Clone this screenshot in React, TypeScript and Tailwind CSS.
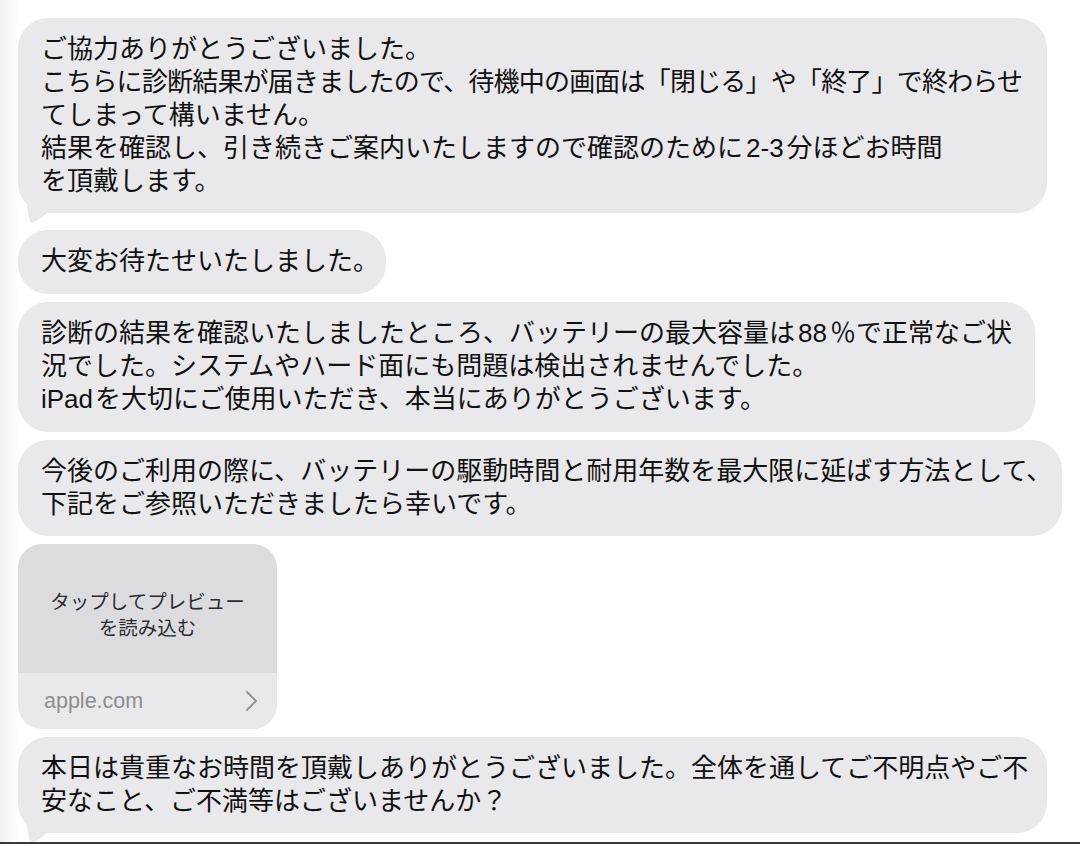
import { ReactNode } from "react";

// Received-message tail, drawn at the bottom-left corner of a bubble
function Tail() {
  return (
    <svg
      viewBox="0 0 44 34"
      className="absolute left-0 bottom-[-10px] w-[44px] h-[34px]"
    >
      <path
        d="M9 8 C9 20 10 28 13 34 C19 32 25 28 30 23 L44 23 L44 8 Z"
        className="fill-[#e9e9eb]"
      />
    </svg>
  );
}

function Bubble({
  width,
  tail,
  className = "",
  children,
}: {
  width: string;
  tail?: boolean;
  className?: string;
  children: ReactNode;
}) {
  return (
    <div
      className={`relative bg-[#e9e9eb] rounded-[30px] pl-[23px] pt-[15px] text-[26px] leading-[33px] text-[#111] ${width} ${className}`}
    >
      {tail && <Tail />}
      <div className="relative flex flex-col whitespace-nowrap">{children}</div>
    </div>
  );
}

export default function App() {
  return (
    <div className="w-[1080px] h-[844px] flex flex-col overflow-hidden bg-[linear-gradient(to_right,#f1f1f1,#ffffff_18px)] font-['Liberation_Sans','Noto_Sans_CJK_JP',sans-serif]">
      <div className="flex-1 overflow-hidden flex flex-col items-start gap-[8px] pt-[18px] pl-[18px]">
        {/* First message */}
        <Bubble width="w-[1029px]" tail className="pb-[15px] mb-[9px]">
          <span>ご協力ありがとうございました。</span>
          <span className="tracking-[-0.8px]">
            こちらに診断結果が届きましたので、待機中の画面は「閉じる」や「終了」で終わらせ
          </span>
          <span>てしまって構いません。</span>
          <span>
            結果を確認し、引き続きご案内いたしますので確認のために
            <span className="mx-[3px]">2-3</span>分ほどお時間
          </span>
          <span>を頂戴します。</span>
        </Bubble>

        <Bubble width="w-[368px]" className="pb-[16px]">
          <span>大変お待たせいたしました。</span>
        </Bubble>

        <Bubble width="w-[1017px]" className="pb-[16px]">
          <span>
            診断の結果を確認いたしましたところ、バッテリーの最大容量は
            <span className="mx-[3px]">88</span>％で正常なご状
          </span>
          <span>況でした。システムやハード面にも問題は検出されませんでした。</span>
          <span>
            iPad<span className="ml-[2px]">を大切にご使用いただき、本当にありがとうございます。</span>
          </span>
        </Bubble>

        <Bubble width="w-[1044px]" className="pb-[15px]">
          <span>
            今後のご利用の際に、バッテリーの駆動時間と耐用年数を最大限に延ばす方法として、
          </span>
          <span>下記をご参照いただきましたら幸いです。</span>
        </Bubble>

        {/* Link preview */}
        <div className="w-[259px] rounded-[24px] overflow-hidden flex flex-col">
          <div className="h-[129px] bg-[#dcdcdf] pt-[45px] flex flex-col items-center text-[19.5px] leading-[26px] text-[#2c2c2e]">
            <span>タップしてプレビュー</span>
            <span>を読み込む</span>
          </div>
          <div className="h-[56px] bg-[#e9e9eb] flex items-center justify-between pl-[26px] pr-[19px]">
            <span className="text-[21.5px] text-[#8e8e93]">apple.com</span>
            <svg viewBox="0 0 13 22" className="w-[13px] h-[22px]">
              <path
                d="M2 2 L11 11 L2 20"
                fill="none"
                stroke="#8e8e93"
                strokeWidth="1.8"
                strokeLinecap="round"
                strokeLinejoin="round"
              />
            </svg>
          </div>
        </div>

        <Bubble width="w-[1029px]" tail className="pb-[15px]">
          <span>
            本日は貴重なお時間を頂戴しありがとうございました。全体を通してご不明点やご不
          </span>
          <span>安なこと、ご不満等はございませんか？</span>
        </Bubble>
      </div>
      <div className="h-[2px] bg-[#3a3a3a]" />
    </div>
  );
}
